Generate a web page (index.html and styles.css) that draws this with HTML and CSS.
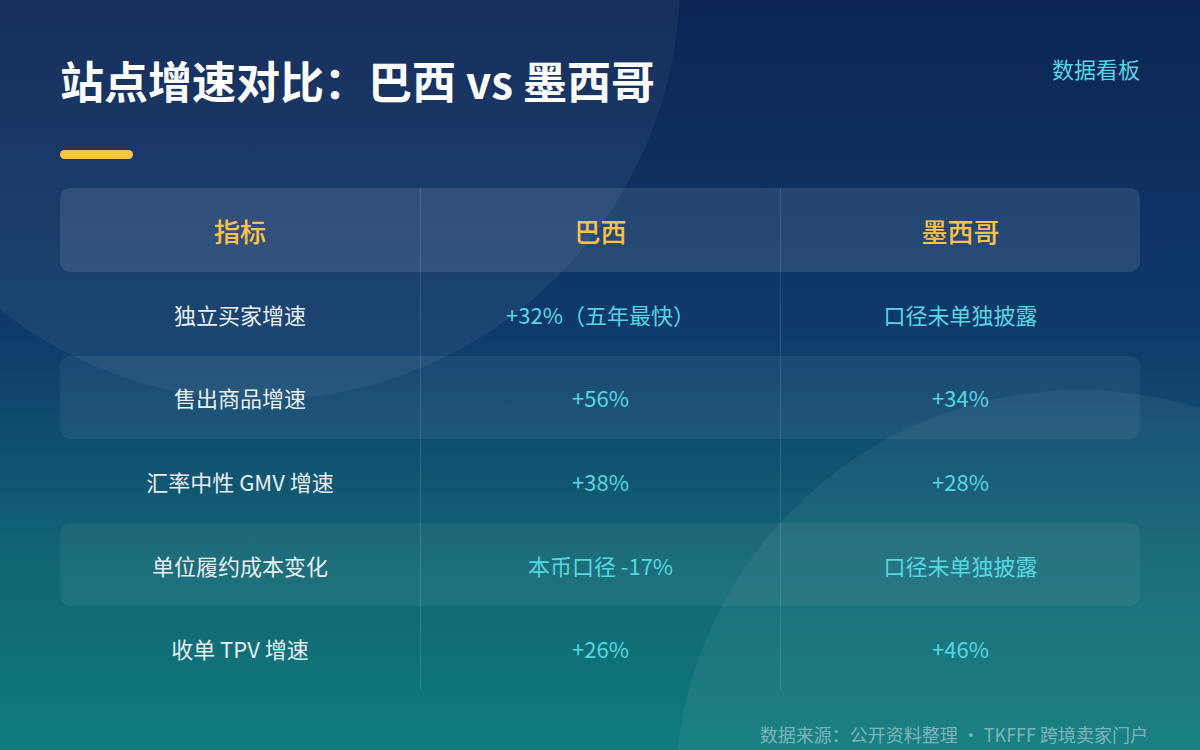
FILE: index.html
```html
<!DOCTYPE html>
<html lang="zh-CN">
<head>
<meta charset="utf-8">
<title>站点增速对比</title>
<link rel="stylesheet" href="styles.css">
</head>
<body>
<div class="page">
  <div class="deco deco-a"></div>
  <div class="deco deco-b"></div>
  <div class="content">
    <header class="head">
      <h1 class="title">站点增速对比：巴西 vs 墨西哥</h1>
      <span class="tag">数据看板</span>
    </header>
    <div class="accent"></div>
    <div class="table">
      <div class="row row-head">
        <div class="cell">指标</div>
        <div class="cell sep">巴西</div>
        <div class="cell sep">墨西哥</div>
      </div>
      <div class="row">
        <div class="cell label">独立买家增速</div>
        <div class="cell sep val">+32%（五年最快）</div>
        <div class="cell sep val">口径未单独披露</div>
      </div>
      <div class="row row-alt">
        <div class="cell label">售出商品增速</div>
        <div class="cell sep val">+56%</div>
        <div class="cell sep val">+34%</div>
      </div>
      <div class="row">
        <div class="cell label">汇率中性 GMV 增速</div>
        <div class="cell sep val">+38%</div>
        <div class="cell sep val">+28%</div>
      </div>
      <div class="row row-alt">
        <div class="cell label">单位履约成本变化</div>
        <div class="cell sep val">本币口径 -17%</div>
        <div class="cell sep val">口径未单独披露</div>
      </div>
      <div class="row">
        <div class="cell label">收单 TPV 增速</div>
        <div class="cell sep val">+26%</div>
        <div class="cell sep val">+46%</div>
      </div>
    </div>
    <footer class="foot">数据来源：公开资料整理 · TKFFF 跨境卖家门户</footer>
  </div>
</div>
</body>
</html>
```

FILE: styles.css
```css
* { box-sizing: border-box; margin: 0; padding: 0; }

html, body {
  width: 1200px;
  height: 750px;
  overflow: hidden;
}

body {
  font-family: "Noto Sans CJK SC", "Noto Sans", sans-serif;
  background: #0b2456;
}

.page {
  position: relative;
  width: 1200px;
  height: 750px;
  overflow: hidden;
  background: linear-gradient(180deg, #0b2455 0%, #0f3b6c 45%, #106674 75%, #0f7b7e 100%);
}

.deco {
  position: absolute;
  border-radius: 50%;
  background: rgba(255, 255, 255, 0.05);
}

.deco-a {
  width: 840px;
  height: 840px;
  left: -160px;
  top: -440px;
}

.deco-b {
  width: 810px;
  height: 810px;
  left: 675px;
  top: 390px;
}

.content {
  position: relative;
  padding: 54px 60px 0 60px;
  display: flex;
  flex-direction: column;
}

.head {
  display: flex;
  justify-content: space-between;
  align-items: flex-start;
}

.title {
  font-size: 44px;
  line-height: 52px;
  font-weight: 700;
  color: #ffffff;
  letter-spacing: 0;
}

.tag {
  font-size: 22px;
  line-height: 30px;
  margin-top: -1px;
  color: #55d6e0;
}

.accent {
  width: 73px;
  height: 9px;
  border-radius: 5px;
  background: #ffc24a;
  margin-top: 44px;
}

.table {
  margin-top: 29px;
  display: flex;
  flex-direction: column;
}

.row {
  display: grid;
  grid-template-columns: 360px 360px 360px;
  height: 83.6px;
  border-radius: 10px;
}

.row-head {
  height: 84px;
  background: rgba(255, 255, 255, 0.1);
}

.row-alt {
  background: rgba(255, 255, 255, 0.055);
}

.cell {
  display: flex;
  align-items: center;
  justify-content: center;
  font-size: 22px;
  color: #55d6e0;
}

.sep {
  border-left: 1px solid rgba(255, 255, 255, 0.13);
}

.row-head .cell {
  font-size: 26px;
  font-weight: 500;
  color: #ffc24a;
}

.cell.label {
  color: #e8eef6;
}

.foot {
  margin-top: 32px;
  margin-right: -8px;
  align-self: flex-end;
  font-size: 18px;
  line-height: 24px;
  color: rgba(190, 215, 225, 0.62);
}
```
